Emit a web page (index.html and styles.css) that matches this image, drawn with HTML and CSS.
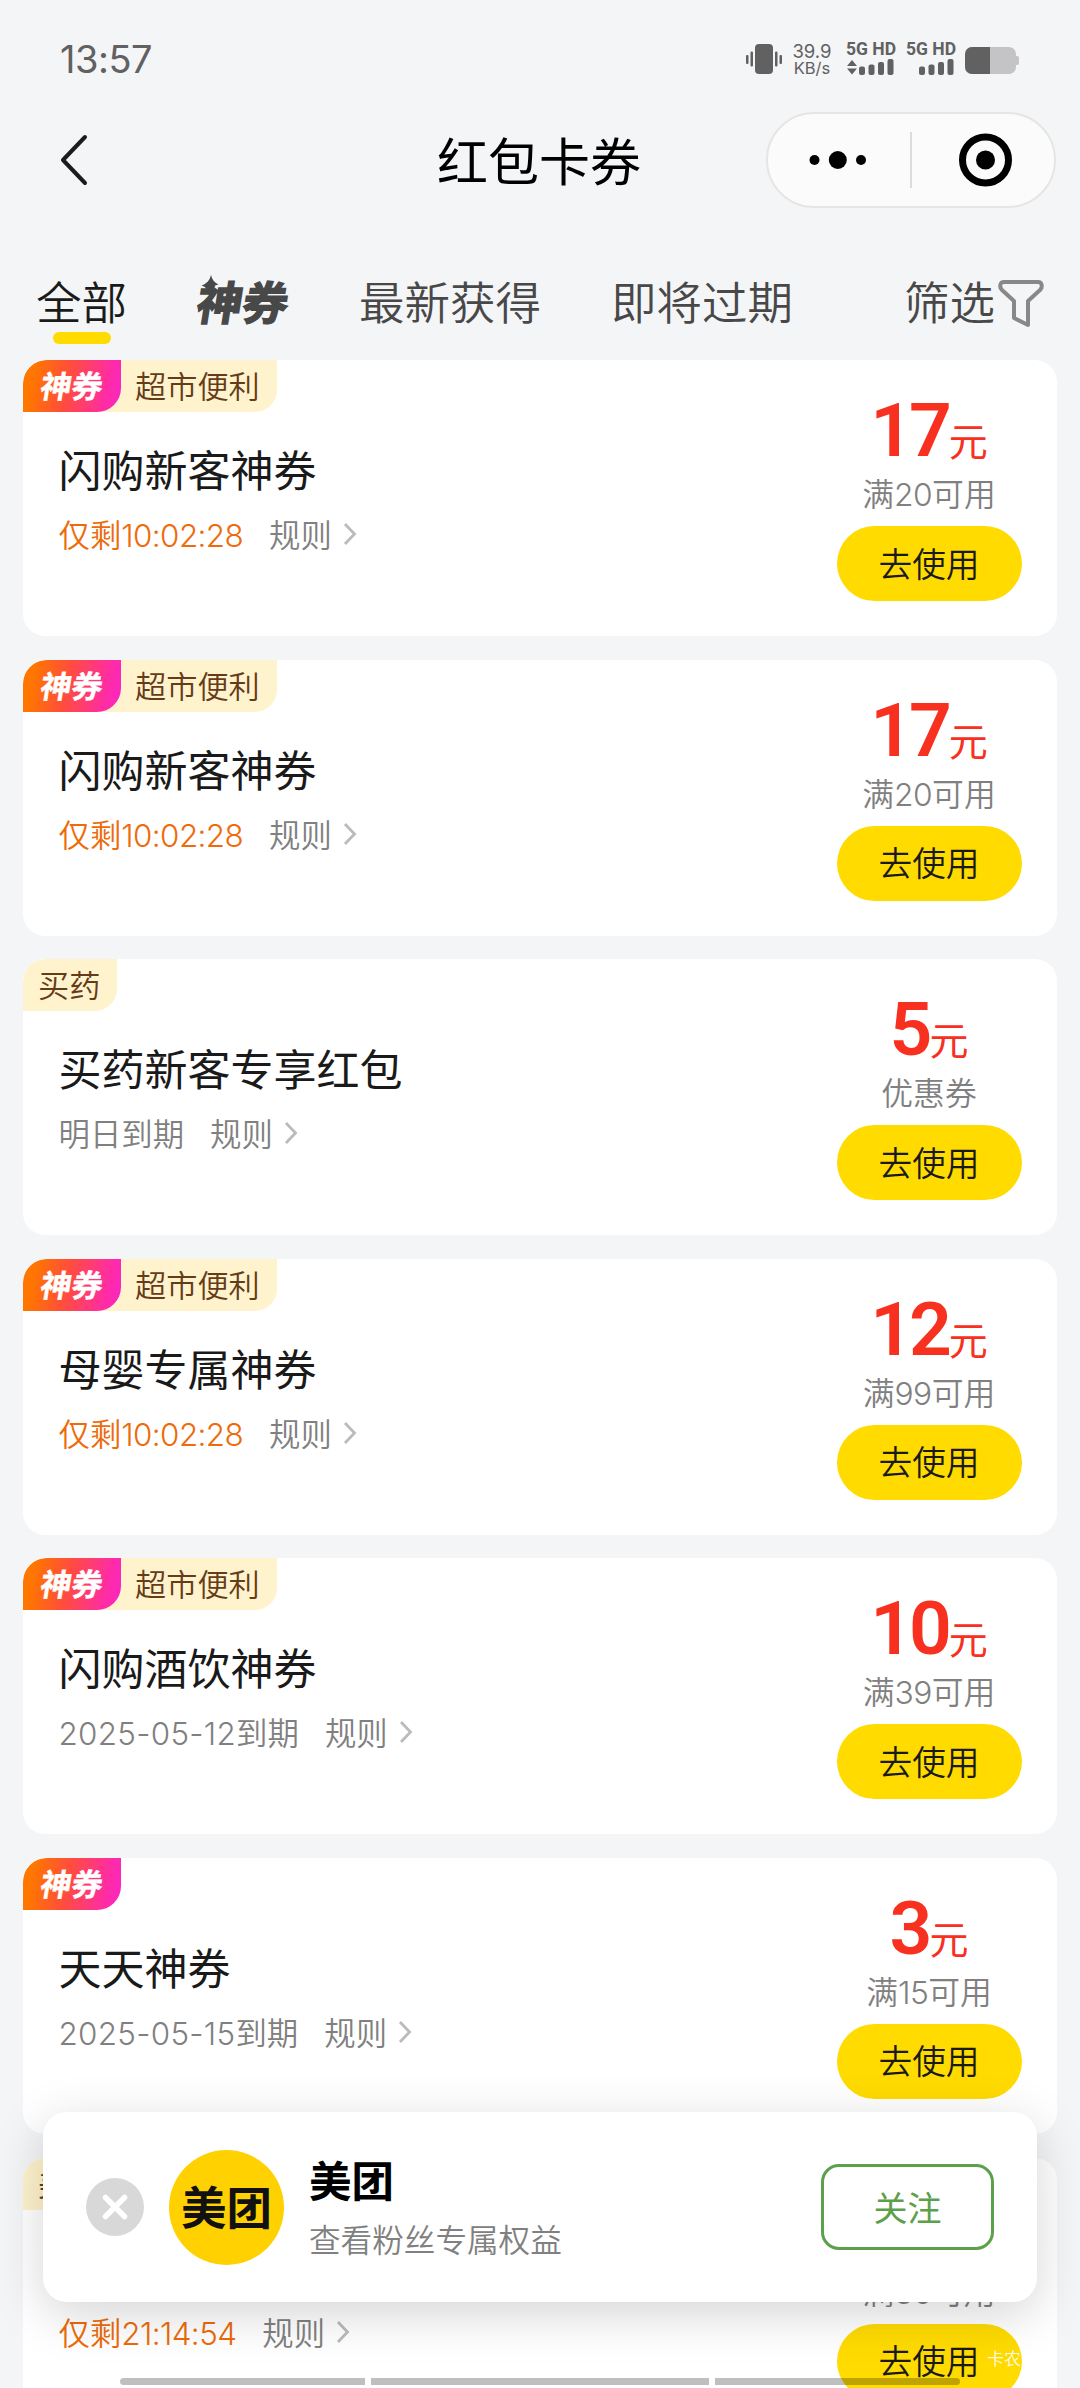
FILE: index.html
```html
<!DOCTYPE html>
<html lang="zh-CN">
<head>
<meta charset="utf-8">
<title>红包卡券</title>
<link rel="stylesheet" href="styles.css">
</head>
<body>
<svg class="defs" width="0" height="0" aria-hidden="true">
  <symbol id="arrow" viewBox="0 0 14 24"><path d="M2 2l9.500 10L2 22" fill="none" stroke="#bbb" stroke-width="2.800"/></symbol>
</svg>
<div class="screen">
  <header class="status">
    <span class="time">13:57</span>
    <div class="indicators">
      <svg class="vibrate" width="36" height="32" viewBox="0 0 36 32" fill="#616161"><rect x="9" y="1" width="18" height="30" rx="4"/><rect x="0" y="12" width="2.500" height="9" rx="1"/><rect x="4.500" y="8.500" width="2.500" height="15" rx="1"/><rect x="29" y="8.500" width="2.500" height="15" rx="1"/><rect x="33.500" y="12" width="2.500" height="9" rx="1"/></svg>
      <div class="speed"><span>39.9</span><span class="unit">KB/s</span></div>
      <div class="sim">
        <span>5G HD</span>
        <svg width="50" height="16" viewBox="0 0 50 16" fill="#616161"><path d="M1 7l5-6 5 6zM1 9.500h10l-5 6z"/><rect x="13" y="7.500" width="6" height="8.500" rx="2"/><rect x="22.500" y="5.500" width="6" height="10.500" rx="2"/><rect x="32" y="3" width="6" height="13" rx="2"/><rect x="41.500" y="0" width="6" height="16" rx="2"/></svg>
      </div>
      <div class="sim">
        <span>5G HD</span>
        <svg width="50" height="16" viewBox="0 0 50 16" fill="#616161"><rect x="13" y="7.500" width="6" height="8.500" rx="2"/><rect x="22.500" y="5.500" width="6" height="10.500" rx="2"/><rect x="32" y="3" width="6" height="13" rx="2"/><rect x="41.500" y="0" width="6" height="16" rx="2"/></svg>
      </div>
      <svg class="battery" width="54" height="27" viewBox="0 0 54 27"><rect x="47" y="9" width="7" height="9" rx="2" fill="#c4c4c6"/><rect width="51" height="27" rx="7" fill="#c4c4c6"/><path d="M25 0H7a7 7 0 0 0-7 7v13a7 7 0 0 0 7 7h18z" fill="#616161"/></svg>
    </div>
  </header>

  <nav class="navbar">
    <svg class="back" width="30" height="52" viewBox="0 0 30 52"><path d="M27 3L5 26l22 23" fill="none" stroke="#1c1c1e" stroke-width="4" stroke-linecap="round" stroke-linejoin="round"/></svg>
    <h1>红包卡券</h1>
    <div class="capsule">
      <svg width="285" height="92" viewBox="0 0 285 92"><circle cx="46.500" cy="46" r="5"/><circle cx="69.800" cy="46" r="9"/><circle cx="93" cy="46" r="5"/><path d="M143 18v56" stroke="#dcdcdc" stroke-width="2"/><circle cx="217.500" cy="46" r="23" fill="none" stroke="#000" stroke-width="7"/><circle cx="217.500" cy="46" r="9.500"/></svg>
    </div>
  </nav>

  <div class="tabs">
    <span class="tab active">全部</span>
    <span class="tab brand"><svg class="spark" width="18" height="21" viewBox="0 0 16 20"><path d="M9 0q1 6 7 9-7 1-9 9-1-6-7-8 7-2 9-10z" fill="#484848"/></svg><b>神券</b></span>
    <span class="tab latest">最新获得</span>
    <span class="tab expiring">即将过期</span>
    <span class="tab filter">筛选<svg width="48" height="50" viewBox="0 0 48 50"><path d="M7 3h34c4 0 5 5 2 8L31 22v24L17 39V22L5 11C2 8 3 3 7 3z" fill="none" stroke="#888" stroke-width="4" stroke-linejoin="round"/></svg></span>
  </div>

  <main class="list">
    <article class="card">
      <div class="badges"><span class="hot"><b>神券</b></span><span class="cat joined">超市便利</span></div>
      <div class="info"><h2>闪购新客神券</h2><p><span class="left">仅剩<i class="num">10:02:28</i></span><span class="rule">规则<svg width="14" height="24"><use href="#arrow"/></svg></span></p></div>
      <div class="offer"><div class="price"><b>17</b>元</div><div class="cond">满<i class="num">20</i>可用</div><button>去使用</button></div>
    </article>
    <article class="card">
      <div class="badges"><span class="hot"><b>神券</b></span><span class="cat joined">超市便利</span></div>
      <div class="info"><h2>闪购新客神券</h2><p><span class="left">仅剩<i class="num">10:02:28</i></span><span class="rule">规则<svg width="14" height="24"><use href="#arrow"/></svg></span></p></div>
      <div class="offer"><div class="price"><b>17</b>元</div><div class="cond">满<i class="num">20</i>可用</div><button>去使用</button></div>
    </article>
    <article class="card">
      <div class="badges"><span class="cat">买药</span></div>
      <div class="info"><h2>买药新客专享红包</h2><p><span>明日到期</span><span class="rule">规则<svg width="14" height="24"><use href="#arrow"/></svg></span></p></div>
      <div class="offer"><div class="price"><b>5</b>元</div><div class="cond">优惠券</div><button>去使用</button></div>
    </article>
    <article class="card">
      <div class="badges"><span class="hot"><b>神券</b></span><span class="cat joined">超市便利</span></div>
      <div class="info"><h2>母婴专属神券</h2><p><span class="left">仅剩<i class="num">10:02:28</i></span><span class="rule">规则<svg width="14" height="24"><use href="#arrow"/></svg></span></p></div>
      <div class="offer"><div class="price"><b>12</b>元</div><div class="cond">满<i class="num">99</i>可用</div><button>去使用</button></div>
    </article>
    <article class="card">
      <div class="badges"><span class="hot"><b>神券</b></span><span class="cat joined">超市便利</span></div>
      <div class="info"><h2>闪购酒饮神券</h2><p><span><i class="num date">2025-05-12</i>到期</span><span class="rule">规则<svg width="14" height="24"><use href="#arrow"/></svg></span></p></div>
      <div class="offer"><div class="price"><b>10</b>元</div><div class="cond">满<i class="num">39</i>可用</div><button>去使用</button></div>
    </article>
    <article class="card">
      <div class="badges"><span class="hot"><b>神券</b></span></div>
      <div class="info"><h2>天天神券</h2><p><span><i class="num date">2025-05-15</i>到期</span><span class="rule">规则<svg width="14" height="24"><use href="#arrow"/></svg></span></p></div>
      <div class="offer"><div class="price"><b>3</b>元</div><div class="cond">满<i class="num">15</i>可用</div><button>去使用</button></div>
    </article>
    <article class="card">
      <div class="badges"><span class="cat">美团</span></div>
      <div class="info"><h2></h2><p><span class="left">仅剩<i class="num">21:14:54</i></span><span class="rule">规则<svg width="14" height="24"><use href="#arrow"/></svg></span></p></div>
      <div class="offer"><div class="price"></div><div class="cond">满<i class="num">30</i>可用</div><button>去使用</button></div>
    </article>
  </main>

  <aside class="follow">
    <svg class="close" width="58" height="58" viewBox="0 0 58 58"><circle cx="29" cy="29" r="29" fill="#d8d8d8"/><path d="M19.500 19.500l19 19m0-19l-19 19" stroke="#fff" stroke-width="5.500" stroke-linecap="round"/></svg>
    <div class="logo">美团</div>
    <div class="who"><strong>美团</strong><span>查看粉丝专属权益</span></div>
    <button class="follow-btn">关注</button>
  </aside>
  <span class="mark">卡农</span>
  <div class="homebar"><i></i><i class="mid"></i><i></i></div>
</div>
</body>
</html>
```

FILE: styles.css
```css
* { box-sizing: border-box; margin: 0; padding: 0; }
body { background: #f4f5f7; }
i { font-style: normal; }
.defs { position: absolute; }
.screen {
  position: relative;
  width: 1080px;
  height: 2388px;
  overflow: hidden;
  background: #f4f5f7;
  color: #1a1a1a;
  font-family: "Noto Sans CJK SC", sans-serif;
  font-weight: 350;
  display: flex;
  flex-direction: column;
}

/* status bar */
.status {
  flex: none;
  height: 112px;
  padding: 0 61px 0 60px;
  display: flex;
  justify-content: space-between;
  color: #616161;
}
.time { font: 400 38px/44px Inter, sans-serif; letter-spacing: -0.5px; margin-top: 37px; }
.indicators { display: flex; }
.vibrate { margin-top: 43px; }
.speed {
  width: 40px;
  margin: 43px 0 0 10px;
  display: flex;
  flex-direction: column;
  align-items: center;
  font: 400 18.500px/17px Inter, sans-serif;
}
.speed .unit { font-size: 16.500px; }
.sim {
  width: 50px;
  margin: 41px 0 0 14px;
  display: flex;
  flex-direction: column;
  font: 700 17.500px/16px Roboto, sans-serif;
  white-space: nowrap;
}
.sim + .sim { margin-left: 10px; }
.sim svg { margin-top: 2px; }
.battery { margin: 47px 0 0 9px; }

/* navigation bar */
.navbar {
  flex: none;
  height: 96px;
  padding: 0 24px 0 58px;
  display: grid;
  grid-template-columns: 290px 1fr 290px;
  align-items: center;
}
.navbar h1 { font-size: 51px; line-height: 70px; font-weight: 400; color: #000; width: 210px; margin: -3px 0 0 89px; white-space: nowrap; }
.capsule { width: 290px; height: 96px; border: 2px solid #e5e5e5; border-radius: 48px; background: #fbfbfb; justify-self: end; }
.capsule svg { display: block; }

/* tabs */
.tabs {
  flex: none;
  height: 152px;
  padding: 59px 35px 0 36px;
  display: flex;
  align-items: flex-start;
  font-size: 45.500px;
  line-height: 66px;
  color: #484848;
}
.tab { white-space: nowrap; }
.active { width: 91px; color: #1a1a1a; }
.active::after { content: ""; display: block; width: 58px; height: 12px; margin: -1px auto 0; border-radius: 6px; background: #ffdb00; }
.brand { position: relative; margin-left: 71px; width: 92px; }
.brand b { display: inline-block; font-weight: 700; -webkit-text-stroke: 1.500px #484848; transform: skewX(-9deg); }
.spark { position: absolute; left: 3px; top: 8px; }
.latest { margin-left: 69px; }
.expiring { margin-left: 70px; }
.filter { margin-left: auto; display: flex; }
.filter svg { margin: 12px 0 0 2px; }

/* coupons */
.list { padding: 0 23px; display: flex; flex-direction: column; gap: 23.600px; }
.card {
  flex: none;
  height: 276px;
  border-radius: 22px;
  background: #fff;
  overflow: hidden;
  display: grid;
  grid-template: 52px 224px / 1fr 256px;
}
.badges { display: flex; height: 52px; }
.hot {
  z-index: 1;
  width: 98px;
  border-radius: 24px 0 24px 0;
  background: linear-gradient(100deg, #ff7600 12%, #ff4d3c 45%, #ff2ba8 85%, #f825c8);
  color: #fff;
  text-align: center;
  font-size: 31px;
  line-height: 50px;
}
.hot b { display: inline-block; font-weight: 700; -webkit-text-stroke: 0.400px #fff; transform: skewX(-9deg); }
.cat {
  padding: 0 17px 0 15px;
  border-radius: 22px 0 22px 0;
  background: #fff3cd;
  color: #663c18;
  font-size: 31.200px;
  line-height: 50px;
}
.joined { margin-left: -24px; padding: 0 17.500px 0 38px; border-radius: 0 0 22px 0; }
.info { grid-row: 2; padding: 25px 0 0 35.500px; }
.info h2 { height: 62px; font-size: 43px; line-height: 62px; font-weight: 400; }
.info p { display: flex; gap: 26px; height: 46px; margin-top: 12px; font-size: 31.400px; line-height: 46px; color: #808080; white-space: nowrap; }
.left { color: #ed6b0a; }
.rule { display: flex; align-items: center; gap: 11px; }
.num { font-family: Inter, sans-serif; font-weight: 350; letter-spacing: -0.600px; }
.date { letter-spacing: 0.300px; }
.offer {
  grid-area: 1 / 2 / 3 / 3;
  display: flex;
  flex-direction: column;
  align-items: center;
}
.price { height: 110px; line-height: 110px; padding-top: 24px; font-size: 39px; font-weight: 400; color: #f8301f; white-space: nowrap; }
.price b { font: 600 75px/90px Roboto, sans-serif; letter-spacing: -4px; margin-right: 1px; }
.cond { height: 46px; font-size: 31.800px; line-height: 44px; color: #808080; }
.offer button {
  width: 185px;
  height: 75px;
  margin-top: 10px;
  border: 0;
  border-radius: 38px;
  background: #ffdb00;
  color: #1a1a1a;
  font: 350 33.700px/72px "Noto Sans CJK SC", sans-serif;
  padding-bottom: 2px;
}

/* follow prompt floating over the list */
.follow {
  position: absolute;
  left: 43px;
  top: 2112px;
  width: 994px;
  height: 190px;
  padding: 0 43px;
  border-radius: 24px;
  background: #fff;
  box-shadow: 0 12px 50px rgba(0, 0, 0, .17);
  display: flex;
  align-items: center;
}
.logo {
  width: 115px;
  height: 115px;
  margin-left: 25px;
  border-radius: 50%;
  background: #ffd100;
  color: #111;
  text-align: center;
  font-size: 45.500px;
  line-height: 110px;
  font-weight: 700;
}
.who { flex: 1; margin: -4px 0 0 25px; display: flex; flex-direction: column; }
.who strong { font-size: 42.500px; line-height: 60px; font-weight: 700; color: #000; }
.who span { font-size: 31.600px; line-height: 46px; color: #808080; margin-top: 6px; }
.follow-btn { width: 173px; height: 86px; border: 3px solid #5ca04c; border-radius: 18px; background: #fff; color: #5ca04c; font: 400 34px/78px "Noto Sans CJK SC", sans-serif; }
.mark { position: absolute; left: 987px; top: 2345px; font-size: 17px; line-height: 26px; color: rgba(255, 255, 255, .9); }
.homebar { position: absolute; left: 120px; top: 2378px; width: 840px; display: flex; gap: 6px; }
.homebar i { width: 245px; height: 7px; background: rgba(0, 0, 0, .25); }
.homebar .mid { width: 338px; }
.homebar i:first-child { border-radius: 4px 0 0 4px; }
.homebar i:last-child { border-radius: 0 4px 4px 0; }
```
